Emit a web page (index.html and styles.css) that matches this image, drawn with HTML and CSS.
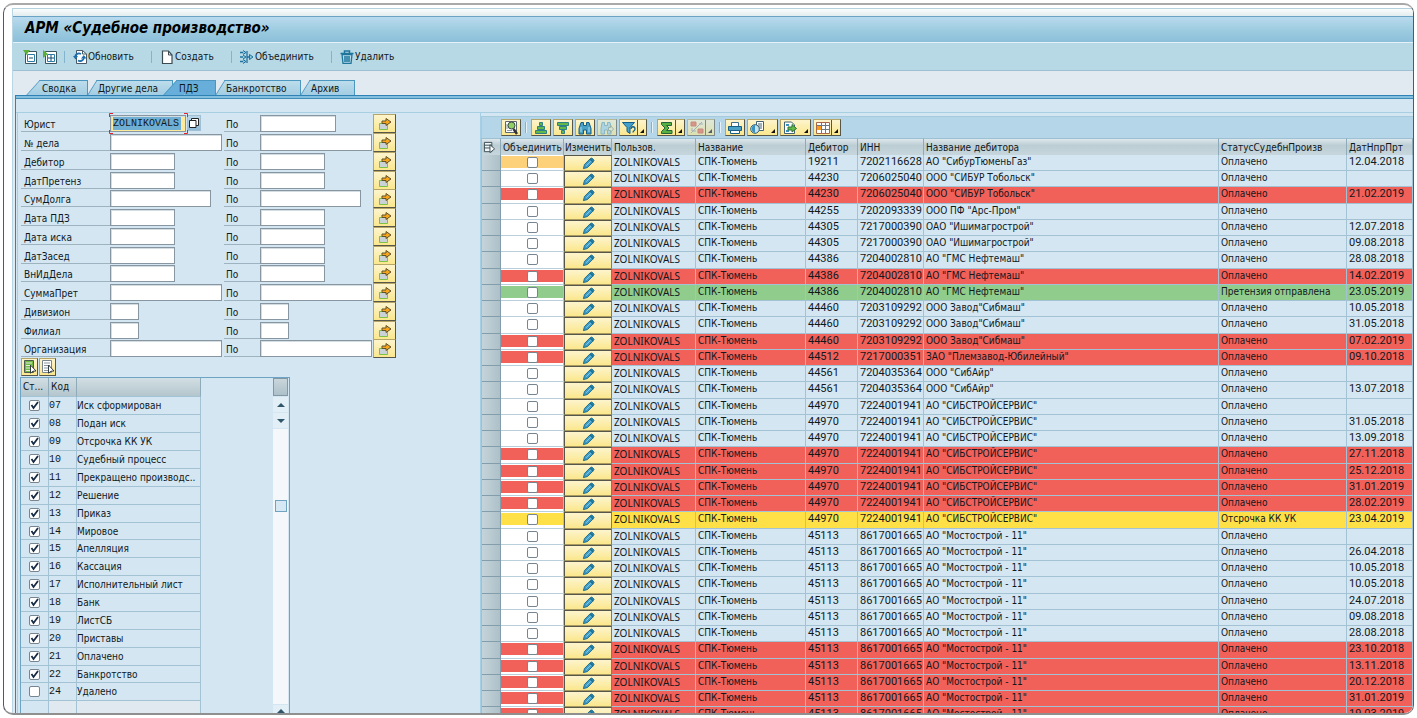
FILE: index.html
```html
<!DOCTYPE html>
<html lang="ru">
<head>
<meta charset="utf-8">
<title>АРМ «Судебное производство»</title>
<link rel="stylesheet" href="styles.css">
</head>
<body>
<svg class="sprite" aria-hidden="true">
  <symbol id="i-arrow" viewBox="0 0 14 14"><path d="M1.500 6.500h8v6h-8z" fill="#c9d3d6" stroke="#7cc044"/><path d="M4 4h4V1.500L13 5 8 8.500V6.500H4z" fill="#f9a51b" stroke="#5d5230"/></symbol>
  <symbol id="i-pencil" viewBox="0 0 14 14"><path d="M1.500 12.500l1.200-4.500L8.500 2.200l3.300 3.300-5.800 5.800z" fill="#3f9cc6" stroke="#17698f"/><path d="M8.500 2.200l2-1.200 2.500 2.500-1.200 2z" fill="#1f7fa8" stroke="#17698f"/><path d="M4.500 9.500l5-5" stroke="#86cbe6"/></symbol>
  <symbol id="i-collapse" viewBox="0 0 14 14"><path d="M2.500 1.500h11v12h-11z" fill="#fff" stroke="#3d5560"/><path d="M4.500 4.500h7v7h-7z" fill="none" stroke="#2a7aa8"/><path d="M6 8h4" stroke="#104a74"/><path d="M0 0h7L3.500 5z" fill="#5cae38"/></symbol>
  <symbol id="i-expand" viewBox="0 0 14 14"><path d="M2.500 1.500h11v12h-11z" fill="#fff" stroke="#3d5560"/><path d="M4.500 4.500h7v7h-7z" fill="none" stroke="#2a7aa8"/><path d="M5 8h6M8 5v6" stroke="#104a74"/><path d="M0 0l5 4L0 8z" fill="#5cae38"/></symbol>
  <symbol id="i-refresh" viewBox="0 0 14 14"><path d="M3.500.500h6l4 3.500v9.500h-10z" fill="#fff" stroke="#4a5a66"/><path d="M9.500.500V4h4" fill="none" stroke="#4a5a66"/><path d="M2 7a4 4 0 0 1 6-3M11 7.500a4 4 0 0 1-6 3" fill="none" stroke="#1c6fae" stroke-width="1.800"/><path d="M0 6h5L2.500 9.500zM8 8.500h5.500L10.800 5z" fill="#1c6fae"/></symbol>
  <symbol id="i-page" viewBox="0 0 12 14"><path d="M1.500 1h6l3.500 4v8.500h-9.500z" fill="#fff" stroke="#3c4a52" stroke-width="1.200"/><path d="M7.500 1v4H11" fill="none" stroke="#3c4a52"/></symbol>
  <symbol id="i-join" viewBox="0 0 14 14"><path d="M0 2.500h3.500M0 7h4M0 11.500h3.500M7.500 7h3M7 1v12" fill="none" stroke="#20719b" stroke-width="1.300"/><path d="M3 .500L6 2.500 3 4.500M3 5L6 7 3 9M3 9.500l3 2-3 2M9.500 4.500l3.500 2.500-3.500 2.500z" fill="#8cc6de" stroke="#20719b"/></symbol>
  <symbol id="i-trash" viewBox="0 0 14 14"><path d="M2 4.500h10l-1 9H3z" fill="#b9deec" stroke="#1f759c" stroke-width="1.300"/><path d="M.500 3.500h13M4.500 3V1h5v2M5 6v6M7 6v6M9 6v6" fill="none" stroke="#1f759c" stroke-width="1.500"/></symbol>
  <symbol id="i-all" viewBox="0 0 14 14"><path d="M1.500.500h9v12h-9z" fill="#6fb944" stroke="#4c5a50"/><path d="M3 3h6M3 5.500h6M3 8h5M3 10.500h4" stroke="#e4f3d8"/><path d="M7.500 5l5.500 6-3 .2-2.500 2z" fill="#fff" stroke="#333d44"/></symbol>
  <symbol id="i-none" viewBox="0 0 14 14"><path d="M1.500.500h9v12h-9z" fill="#fff" stroke="#7a868c"/><path d="M3 3h6M3 5.500h6M3 8h5M3 10.500h4" stroke="#8a969c"/><path d="M7.500 5l5.500 6-3 .2-2.500 2z" fill="#fff" stroke="#333d44"/></symbol>
  <symbol id="i-copy" viewBox="0 0 12 12"><path d="M3.500 1.500h7v7h-7z" fill="#fff" stroke="#222"/><path d="M1.500 3.500h6.500v7h-6.500z" fill="#fff" stroke="#222"/></symbol>
  <symbol id="i-detail" viewBox="0 0 14 14"><path d="M1.500.500h11v11h-11z" fill="#fff" stroke="#5b6870"/><path d="M3 9.500h5M3 3v5" stroke="#8b989f"/><circle cx="7.500" cy="4.500" r="3.500" fill="#8fcf66" stroke="#3a4a40"/><path d="M9.500 8l3.500 5" stroke="#333" stroke-width="2.500"/></symbol>
  <symbol id="i-asc" viewBox="0 0 14 14"><path d="M5.500 1.500h3v3h-3z" fill="#63b947" stroke="#2d7f88"/><path d="M3.500 5.500h7v3h-7z" fill="#63b947" stroke="#2d7f88"/><path d="M1.500 9.500h11v3h-11z" fill="#63b947" stroke="#2d7f88"/></symbol>
  <symbol id="i-desc" viewBox="0 0 14 14"><path d="M1.500 1.500h11v3h-11z" fill="#63b947" stroke="#2d7f88"/><path d="M3.500 5.500h7v3h-7z" fill="#63b947" stroke="#2d7f88"/><path d="M5.500 9.500h3v3h-3z" fill="#63b947" stroke="#2d7f88"/></symbol>
  <symbol id="i-find" viewBox="0 0 14 14"><path d="M3 1.500h2.500v3h3v-3H11l2 6v5.500H8.500V9h-3v4H1V7.500z" fill="#4ba0c6" stroke="#155f86"/><path d="M3 6v5M11 6v5" stroke="#a8dcf0"/></symbol>
  <symbol id="i-next" viewBox="0 0 14 14"><path d="M2 1.500h2.500v3h3v-3H10l1 4v7.500H7.500V9h-3v4H1V7.500z" fill="#a8d4dc" stroke="#6ba5b4"/><path d="M8.500 6.500h2v-2l3 3.500-3 3.500v-2h-2z" fill="#f3efc8" stroke="#8a9a80"/></symbol>
  <symbol id="i-filter" viewBox="0 0 14 14"><path d="M.500 1.500h12L8 6.500v6l-3-2v-4z" fill="#43a0cc" stroke="#145f86"/><path d="M9 8c0-3 4-3 4 0 0 2-2 1.500-2 3.500" fill="none" stroke="#145f86" stroke-width="1.300"/></symbol>
  <symbol id="i-sum" viewBox="0 0 14 14"><path d="M1.500 1.500h10v3H6.500l2.500 2.500-2.500 2.500h5.500v3H1.500v-2L5 7 1.500 3.500z" fill="#58b043" stroke="#23663c"/></symbol>
  <symbol id="i-sub" viewBox="0 0 14 14"><path d="M1 1h5v4H1zM8 8h5v4H8z" fill="#ef6b45" stroke="#d35a40"/><path d="M1 12L12 1M2 7v3h4M9 3h4" stroke="#999" fill="none"/></symbol>
  <symbol id="i-print" viewBox="0 0 14 14"><path d="M3.500 1.500h7v4h-7z" fill="#fff" stroke="#3f6e86"/><path d="M.500 5.500h13v4H.500z" fill="#4ba0c6" stroke="#155f86"/><path d="M2.500 9.500h9v3h-9z" fill="#fff" stroke="#155f86"/></symbol>
  <symbol id="i-view" viewBox="0 0 14 14"><path d="M6.500.500h7v9h-7z" fill="#fff" stroke="#436273"/><path d="M8 3h4M8 5h4M8 7h4" stroke="#436273"/><circle cx="5" cy="8" r="4.300" fill="#c5e3ef" stroke="#355d70"/><path d="M5 3.700V12A4.300 4.300 0 0 1 5 3.700" fill="#3991bd"/></symbol>
  <symbol id="i-export" viewBox="0 0 14 14"><path d="M1.500 1h7l3 3v8.500h-10z" fill="#fff" stroke="#436273"/><path d="M3 4h3M3 10h3" stroke="#3991bd" stroke-width="2"/><path d="M5 6h4V3.500L13.500 7.500 9 11V9H5z" fill="#63b947" stroke="#2e6f39"/></symbol>
  <symbol id="i-layout" viewBox="0 0 14 14"><path d="M.500 1.500h13v11H.500z" fill="#fff" stroke="#a9674a"/><path d="M1 4.500h12M1 8.500h12M5.500 2v10M9.500 2v10" stroke="#6d7a80"/><path d="M1 5h4v4H1z" fill="#f79a1d"/></symbol>
  <symbol id="i-select" viewBox="0 0 14 14"><path d="M1.500 1.500h8v10h-8zM1.500 4.500h8M1.500 7.500h8" fill="#f2f6f8" stroke="#33474f"/><path d="M7.500 4l5 4.500-5 4z" fill="#fff" stroke="#33474f"/></symbol>
</svg>

<main class="window">
  <div class="app">
    <header class="title"><h1>АРМ «Судебное производство»</h1></header>
    <nav class="commands" aria-label="Команды">
      <button class="cmd cmd-tree" aria-label="Свернуть"><svg class="icon"><use href="#i-collapse"/></svg></button>
      <button class="cmd cmd-tree" aria-label="Развернуть"><svg class="icon"><use href="#i-expand"/></svg></button>
      <span class="sep"></span>
      <button class="cmd cmd-refresh"><svg class="icon"><use href="#i-refresh"/></svg>Обновить</button>
      <span class="sep"></span>
      <button class="cmd cmd-create"><svg class="icon"><use href="#i-page"/></svg>Создать</button>
      <span class="sep"></span>
      <button class="cmd cmd-join"><svg class="icon"><use href="#i-join"/></svg>Объединить</button>
      <span class="sep"></span>
      <button class="cmd"><svg class="icon"><use href="#i-trash"/></svg>Удалить</button>
    </nav>
    <div class="tabs" role="tablist">
      <button class="tab steep" role="tab">Сводка</button>
      <button class="tab wide" role="tab">Другие дела</button>
      <button class="tab steep active" role="tab" aria-selected="true">ПДЗ</button>
      <button class="tab wide" role="tab">Банкротство</button>
      <button class="tab" role="tab">Архив</button>
    </div>
    <div class="panel">
      <section class="filters">
        <form class="criteria" id="criteria"></form>
        <div class="pick">
          <button class="yellow" aria-label="Выделить все"><svg class="icon"><use href="#i-all"/></svg></button>
          <button class="yellow" aria-label="Снять выделение"><svg class="icon"><use href="#i-none"/></svg></button>
        </div>
        <div class="codes">
          <table class="code-table">
            <colgroup><col class="c-st"><col class="c-code"><col class="c-text"></colgroup>
            <thead><tr><th>Ст...</th><th>Код</th><th></th></tr></thead>
            <tbody id="codes"></tbody>
          </table>
          <div class="scroll">
            <span class="scroll-head"></span>
            <button class="scroll-btn up" aria-label="Вверх"></button>
            <button class="scroll-btn down" aria-label="Вниз"></button>
            <div class="track"><span class="thumb"></span></div>
            <button class="scroll-btn up" aria-label="Страница вверх"></button>
          </div>
        </div>
      </section>
      <section class="cases">
        <div class="grid-tools">
          <button class="yellow" aria-label="Детали"><svg class="icon"><use href="#i-detail"/></svg></button>
          <span class="tick"></span>
          <button class="yellow" aria-label="По возрастанию"><svg class="icon"><use href="#i-asc"/></svg></button>
          <button class="yellow" aria-label="По убыванию"><svg class="icon"><use href="#i-desc"/></svg></button>
          <button class="yellow" aria-label="Найти"><svg class="icon"><use href="#i-find"/></svg></button>
          <button class="yellow dim" aria-label="Найти далее"><svg class="icon"><use href="#i-next"/></svg></button>
          <button class="yellow split" aria-label="Фильтр"><svg class="icon"><use href="#i-filter"/></svg></button>
          <span class="tick"></span>
          <button class="yellow split" aria-label="Итог"><svg class="icon"><use href="#i-sum"/></svg></button>
          <button class="yellow split dim" aria-label="Промежуточный итог"><svg class="icon"><use href="#i-sub"/></svg></button>
          <span class="tick"></span>
          <button class="yellow" aria-label="Печать"><svg class="icon"><use href="#i-print"/></svg></button>
          <button class="yellow menu" aria-label="Виды"><svg class="icon"><use href="#i-view"/></svg></button>
          <button class="yellow menu" aria-label="Экспорт"><svg class="icon"><use href="#i-export"/></svg></button>
          <button class="yellow split" aria-label="Формат"><svg class="icon"><use href="#i-layout"/></svg></button>
        </div>
        <table class="case-table">
          <colgroup><col class="w-sel"><col class="w-join"><col class="w-edit"><col class="w-user"><col class="w-name"><col class="w-num"><col class="w-inn"><col><col class="w-status"><col class="w-date"></colgroup>
          <thead><tr><th class="th-sel"><svg class="icon"><use href="#i-select"/></svg></th><th>Объединить</th><th class="th-edit">Изменить</th><th>Пользов.</th><th>Название</th><th>Дебитор</th><th>ИНН</th><th>Название дебитора</th><th>СтатусСудебнПроизв</th><th>ДатНпрПрт</th></tr></thead>
          <tbody id="cases"></tbody>
        </table>
      </section>
    </div>
  </div>
</main>
<script src="app.js"></script>
</body>
</html>
```
FILE: styles.css
```css
:root {
  --ui: "DejaVu Sans Condensed", "DejaVu Sans", sans-serif;
  --mono: "Liberation Mono", monospace;
  --line: #a3c2d3;
  --panel: #d3e6f2;
}
* { box-sizing: border-box; }
body {
  margin: 0;
  height: 100vh;
  padding: 3px;
  background: #fff;
  color: #10181c;
  font: 10px/14px var(--ui);
  overflow: hidden;
}
.sprite { display: none; }
button, input { font: inherit; color: inherit; margin: 0; }
button { padding: 0; border: 0; background: none; cursor: pointer; }
.icon { width: 14px; height: 14px; flex: none; display: block; }

.window {
  height: 100%;
  border: 1px solid #55595c;
  border-top: 2px solid #a9a9a9;
  border-bottom: 2px solid #8f8f8f;
  border-radius: 10px;
  overflow: hidden;
  padding: 3px 0 0 8px;
  background: #fff;
}
.app {
  height: 100%;
  display: flex;
  flex-direction: column;
  border-top: 1px solid #b3d2df;
  border-left: 1px solid #b9d6e4;
  padding-top: 7px;
  background: linear-gradient(#fafcfb, #dfeaef 8px, #e0eaf0 9px);
}
.title {
  height: 27px;
  flex: none;
  border-top: 1px solid #6ba3c4;
  border-bottom: 1px solid #e4f1f6;
  background: linear-gradient(#b9daee, #9ccbdf 55%, #8cbfdb);
  padding-left: 12px;
}
.title h1 {
  margin: 0;
  font: italic bold 15px/23px var(--ui);
  color: #000;
}
.commands {
  height: 28px;
  flex: none;
  display: flex;
  align-items: center;
  padding-left: 10px;
  background: #b7d8e5;
  border-bottom: 1px solid #9fc0d4;
}
.cmd { display: flex; align-items: center; gap: 1px; white-space: nowrap; }
.cmd-tree { width: 14px; margin-right: 6px; }
.cmd-refresh { width: 70px; }
.cmd-create { width: 63px; }
.cmd-join { width: 83px; }
.sep { width: 1px; height: 12px; margin: 0 8px; background: #84b4cd; }
.cmd-tree + .sep { margin-left: 1px; }

.tabs {
  flex: none;
  height: 24px;
  display: flex;
  align-items: flex-end;
  padding-left: 19px;
}
.tab {
  --fill: linear-gradient(#bcddeb, #a3cde3);
  --skew: -32deg;
  --shift: 0px;
  position: relative;
  isolation: isolate;
  width: 50px;
  height: 15px;
  margin-left: 4px;
  padding: 2px 0 0 6px;
  line-height: 13px;
  text-align: left;
  white-space: nowrap;
}
.tab.wide { width: 81px; }
.tab.steep { --skew: -42deg; --shift: -3px; width: 52px; }
.tab.active { --fill: #67afda; width: 43px; margin-left: 0; }
.tab::before, .tab::after {
  content: "";
  position: absolute;
  z-index: -1;
  top: 0;
  bottom: 0;
  background: var(--fill);
  border-top: 1px solid #4b97c0;
}
.tab::before {
  left: var(--shift);
  width: 20px;
  border-left: 1px solid #4b97c0;
  transform: skewX(var(--skew));
}
.tab::after { left: 12px; right: 0; border-right: 1px solid #4b97c0; }

.panel {
  flex: 1;
  min-height: 0;
  display: flex;
  margin-left: 2px;
  border: solid #2f83b4;
  border-width: 1px 0 0 1px;
  box-shadow: inset 0 2px #84bfdf, inset 0 3px #3f8db9;
  padding-top: 17px;
  background: linear-gradient(#a8cfe1, #a8cfe1) 0 16px / 100% 1px no-repeat, var(--panel);
}
.filters {
  width: 464px;
  flex: none;
  display: flex;
  flex-direction: column;
  border-left: 1px solid #a5cfe4;
  border-right: 1px solid #a5cfe4;
  margin-left: 1px;
  padding: 1px 0 0 3px;
}
.criterion {
  display: grid;
  grid-template-columns: 89px 114px 36px 113px 23px;
  height: 19px;
  align-items: start;
}
.criterion:nth-child(4n) { height: 18px; }
.criterion label {
  height: 18px;
  padding: 4px 0 0 3px;
  line-height: 13px;
  border-bottom: 1px solid #9db4c0;
}
.criterion .to { padding-left: 2px; }
.field { display: flex; position: relative; height: 18px; padding-top: 1px; }
.field input {
  height: 17px;
  border: 1px solid #8796a0;
  background: #fff;
  box-shadow: inset 1px 1px #d4dde2;
  padding: 0 2px;
  font-family: var(--mono);
  outline: 0;
}
.s1 { width: 29px; }
.s2 { width: 65px; }
.s3 { width: 76px; }
.s4 { width: 101px; }
.s5 { width: 112px; }
.field .focused { background: linear-gradient(#6fafd3, #6fafd3) 2px 1px / 68px 13px no-repeat, #fdea9a; }
.focus-ring { position: absolute; left: -1px; top: -1px; width: 79px; height: 21px; pointer-events: none; stroke: #e8202a; fill: none; }
.copy { width: 14px; height: 16px; background: linear-gradient(#bcd9ea, #8fb9d6); border: 1px solid #9fc0d4; margin-left: 1px; }
.copy .icon { width: 12px; height: 12px; }

.yellow {
  display: flex;
  align-items: center;
  justify-content: center;
  background: linear-gradient(#fdf4cd, #fbe78d);
  border: 1px solid #b5a566;
  border-right-color: #57564a;
  border-bottom-color: #57564a;
}
.criterion .yellow { width: 23px; height: 19px; }
.pick { display: flex; gap: 1px; height: 19px; }
.pick .yellow { width: 17px; height: 18px; }

.codes {
  width: 270px;
  flex: 1;
  min-height: 0;
  margin-left: -1px;
  display: flex;
  justify-content: space-between;
  border: solid #6da3c3;
  border-width: 1px 1px 0 1px;
  overflow: hidden;
}
table { border-collapse: separate; border-spacing: 0; table-layout: fixed; }
th { font-weight: normal; text-align: left; white-space: nowrap; overflow: hidden; }
td { white-space: nowrap; overflow: hidden; }
.code-table { width: 180px; align-self: flex-start; }
.c-st { width: 28px; }
.c-code { width: 28px; }
.code-table th {
  height: 19px;
  padding: 0 0 0 2px;
  background: linear-gradient(#d2dfe4, #b4c6cd);
  border-right: 1px solid #8faab8;
  border-bottom: 1px solid var(--line);
}
.code-table td {
  height: 18px;
  padding: 0;
  line-height: 13px;
  border-right: 1px solid var(--line);
  border-bottom: 1px solid var(--line);
}
.code-table tr:nth-child(8n) td { height: 17px; }
.code-table .code { font-family: var(--mono); }
.code-table .blank td { background: #dfe9ef; border-bottom: 0; }
.code-table .blank td:first-child { background: none; }
.box {
  appearance: none;
  display: block;
  width: 11px;
  height: 11px;
  border: 1px solid #76858f;
  border-radius: 2px;
  background: #fff;
}
.code-table .box { margin: 0 auto; }
.box:checked { background: #fff url("data:image/svg+xml,%3Csvg xmlns='http://www.w3.org/2000/svg' viewBox='0 0 9 9'%3E%3Cpath d='M1.500 4l2 3L8 1' fill='none' stroke='%23162a44' stroke-width='1.800'/%3E%3C/svg%3E"); }
.scroll { width: 15px; margin-right: 1px; display: flex; flex-direction: column; gap: 1px; }
.scroll-head { height: 18px; border: 1px solid #8298a4; background: linear-gradient(#c9d6dc, #adc0c9); flex: none; }
.scroll-btn { height: 15px; flex: none; background: #e3eff6; display: flex; align-items: center; justify-content: center; }
.scroll-btn::before { content: ""; border: 4px solid transparent; }
.up::before { border-bottom-color: #31566b; border-top-width: 0; }
.down::before { border-top-color: #31566b; border-bottom-width: 0; }
.track { flex: 1; background: #f4f8fa; padding: 71px 1px 0 2px; }
.thumb { display: block; height: 12px; border: 1px solid #6fa3c0; background: #d5e8f3; }
.scroll .scroll-btn:last-child { height: 8px; align-items: flex-end; }

.cases { flex: 1; min-width: 0; padding-top: 3px; overflow: hidden; background: var(--panel); }
.grid-tools {
  height: 22px;
  display: flex;
  align-items: center;
  gap: 2px;
  padding-left: 19px;
  border-top: 1px solid #a5cbdd;
  border-left: 1px solid #a5cbdd;
  background: #b4d6e8;
}
.grid-tools .yellow { width: 20px; height: 17px; flex: none; }
.grid-tools .split, .grid-tools .menu { width: 28px; justify-content: flex-start; padding-left: 2px; position: relative; }
.grid-tools .menu { width: 31px; }
.split::after, .menu::after {
  content: "";
  position: absolute;
  right: 2px;
  bottom: 2px;
  border: 2px solid #111;
  border-top-color: transparent;
  border-left-color: transparent;
}
.split::before { content: ""; position: absolute; right: 8px; top: 0; bottom: 0; border-left: 1px solid #57564a; }
.grid-tools .dim { opacity: .6; }
.tick { width: 2px; height: 11px; margin: 0 2px; background: #8dafc2; border-right: 1px solid #e6f2f8; }

.case-table { width: 100%; border-left: 1px solid #9dc0d2; }
.w-sel { width: 19px; }
.w-join { width: 63px; }
.w-edit { width: 48px; }
.w-user { width: 84px; }
.w-name { width: 110px; }
.w-num { width: 52px; }
.w-inn { width: 66px; }
.w-status { width: 128px; }
.w-date { width: 66px; }
.case-table th {
  height: 17px;
  padding: 0 0 0 2px;
  line-height: 13px;
  background: linear-gradient(#dde8ec, #bccdd4 40%, #c6d6dc);
  border-right: 1px solid #8faab8;
  border-top: 1px solid #9dc0d2;
}
.case-table .th-sel, .case-table .th-edit { padding-left: 1px; }
.th-sel .icon { width: 13px; height: 13px; }
.case-table td {
  height: 16px;
  padding: 0 0 2px 2px;
  line-height: 12px;
  border-right: 1px solid var(--line);
  border-bottom: 1px solid var(--line);
  background: var(--panel);
}
.case-table tr:nth-child(4n + 3) td { height: 17px; }
.case-table .sel { padding: 0; background: linear-gradient(90deg, #c5d4da, #adc0c8); border-color: #829dab; }
.case-table .user { font-family: "Noto Sans", sans-serif; }
.case-table .figure { font: 11px/12px Roboto, sans-serif; }
.case-table .edit { padding: 0; border: 0; }
.edit .yellow { width: 100%; height: 16px; border-color: #57564a #8a7d4e #a99a60 #57564a; }
.edit .icon { width: 13px; height: 13px; }
tr:nth-child(4n + 3) .edit .yellow { height: 17px; }
.case-table .join { padding: 1px 0 0; background: #fff; border-bottom-color: #b9cfdb; vertical-align: top; }
.join span { display: flex; justify-content: center; height: 12px; }
.join .box { margin-top: 1px; }
.case-table .red td:nth-child(n+4) { background: #f2605a; }
.case-table .green td:nth-child(n+4) { background: #90cd8c; }
.case-table .yel td:nth-child(n+4) { background: #ffe046; }
.red .join span { background: #f2605a; }
.green .join span { background: #90cd8c; }
.yel .join span { background: #ffe046; }
.orange .join span { background: #fdd07a; }
```
FILE: app.js
```js
const icon = (name) => `<svg class="icon"><use href="#i-${name}"/></svg>`;

// label, width class of the "from" and "to" fields
const criteria = [
  ["Юрист", "s3", "s3"], ["№ дела", "s5", "s5"], ["Дебитор", "s2", "s2"],
  ["ДатПретенз", "s2", "s2"], ["СумДолга", "s4", "s4"], ["Дата ПДЗ", "s2", "s2"],
  ["Дата иска", "s2", "s2"], ["ДатЗасед", "s2", "s2"], ["ВнИдДела", "s2", "s2"],
  ["СуммаПрет", "s5", "s5"], ["Дивизион", "s1", "s1"], ["Филиал", "s1", "s1"],
  ["Организация", "s5", "s5"],
];
document.getElementById("criteria").innerHTML = criteria.map(([label, a, b], i) => `
  <div class="criterion">
    <label for="from${i}">${label}</label>
    <div class="field"><input id="from${i}" class="${a}${i ? "" : " focused"}" value="${i ? "" : "ZOLNIKOVALS"}">${i ? "" :
      `<button type="button" class="copy" aria-label="Варианты">${icon("copy")}</button><svg class="focus-ring"><path d="M.5 4V.5H4M75 .5h3.500V4M.5 17v3.500H4M75 20.500h3.500V17"/></svg>`}</div>
    <label class="to" for="to${i}">По</label>
    <div class="field"><input id="to${i}" class="${b}"></div>
    <button type="button" class="yellow" aria-label="Множественный выбор">${icon("arrow")}</button>
  </div>`).join("");

const codes = [
  ["07", "Иск сформирован"], ["08", "Подан иск"], ["09", "Отсрочка КК УК"],
  ["10", "Судебный процесс"], ["11", "Прекращено производс.."], ["12", "Решение"],
  ["13", "Приказ"], ["14", "Мировое"], ["15", "Апелляция"], ["16", "Кассация"],
  ["17", "Исполнительный лист"], ["18", "Банк"], ["19", "ЛистСБ"], ["20", "Приставы"],
  ["21", "Оплачено"], ["22", "Банкротство"], ["24", "Удалено"],
];
document.getElementById("codes").innerHTML = codes.map(([code, text]) => `
  <tr><td><input type="checkbox" class="box" aria-label="${text}"${code === "24" ? "" : " checked"}></td>
  <td class="code">${code}</td><td>${text}</td></tr>`).join("") +
  `<tr class="blank"><td></td><td></td><td></td></tr>`;

// debtor number, INN, debtor name, then [date, row colour, status] for each case
const debtors = [
  ["19211", "7202116628", 'АО "СибурТюменьГаз"', [["12.04.2018", "orange"]]],
  ["44230", "7206025040", 'ООО "СИБУР Тобольск"', [[""], ["21.02.2019", "red"]]],
  ["44255", "7202093339", 'ООО ПФ "Арс-Пром"', [[""]]],
  ["44305", "7217000390", 'ОАО "Ишимагрострой"', [["12.07.2018"], ["09.08.2018"]]],
  ["44386", "7204002810", 'АО "ГМС Нефтемаш"', [["28.08.2018"], ["14.02.2019", "red"], ["23.05.2019", "green", "Претензия отправлена"]]],
  ["44460", "7203109292", 'ООО Завод"Сибмаш"', [["10.05.2018"], ["31.05.2018"], ["07.02.2019", "red"]]],
  ["44512", "7217000351", 'ЗАО "Племзавод-Юбилейный"', [["09.10.2018", "red"]]],
  ["44561", "7204035364", 'ООО "СибАйр"', [[""], ["13.07.2018"]]],
  ["44970", "7224001941", 'АО "СИБСТРОЙСЕРВИС"', [[""], ["31.05.2018"], ["13.09.2018"], ["27.11.2018", "red"], ["25.12.2018", "red"], ["31.01.2019", "red"], ["28.02.2019", "red"], ["23.04.2019", "yel", "Отсрочка КК УК"]]],
  ["45113", "8617001665", 'АО "Мостострой - 11"', [[""], ["26.04.2018"], ["10.05.2018"], ["10.05.2018"], ["24.07.2018"], ["09.08.2018"], ["28.08.2018"], ["23.10.2018", "red"], ["13.11.2018", "red"], ["20.12.2018", "red"], ["31.01.2019", "red"], ["19.03.2019", "red"]]],
];
document.getElementById("cases").innerHTML = debtors.flatMap(([num, inn, name, rows]) =>
  rows.map(([date, colour = "", status = "Оплачено"]) => `
  <tr class="${colour}"><td class="sel"></td>
  <td class="join"><span><input type="checkbox" class="box" aria-label="Объединить ${num}"></span></td>
  <td class="edit"><button class="yellow" aria-label="Изменить ${num}">${icon("pencil")}</button></td>
  <td class="user">ZOLNIKOVALS</td><td>СПК-Тюмень</td><td class="figure">${num}</td><td class="figure">${inn}</td><td>${name}</td><td>${status}</td><td class="figure">${date}</td></tr>`)).join("");
```
